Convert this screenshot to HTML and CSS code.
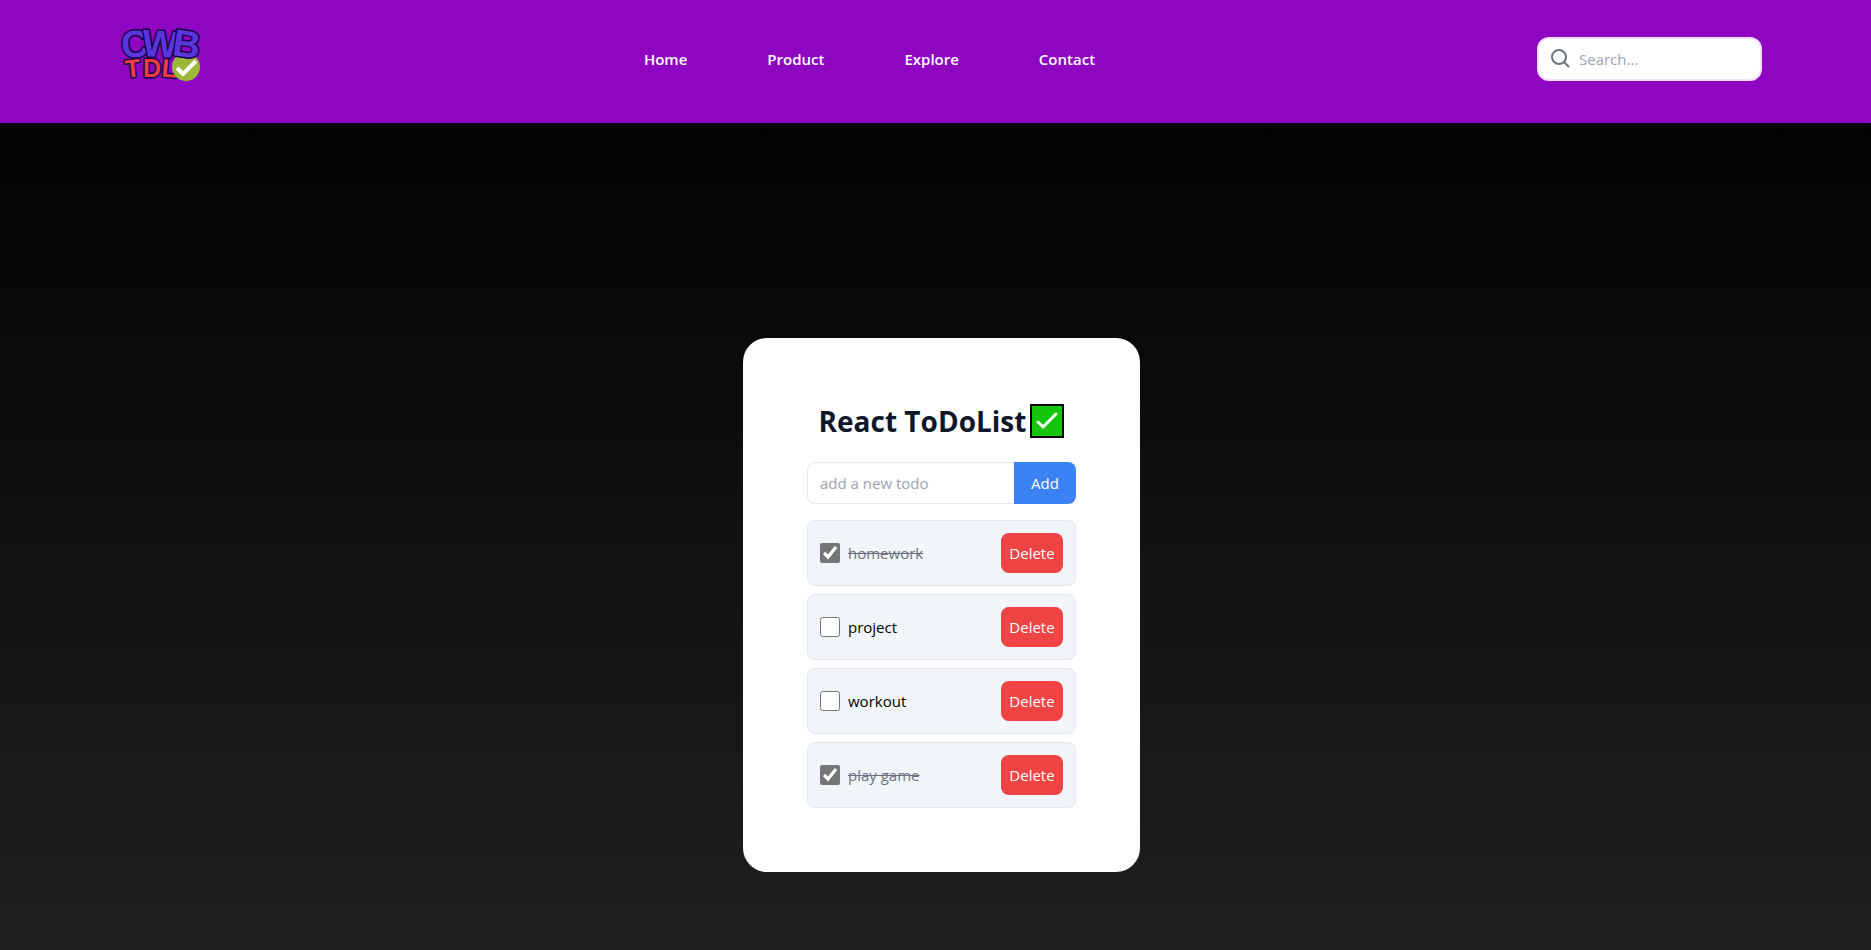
FILE: index.html
```html
<!DOCTYPE html>
<html lang="en">
<head>
<meta charset="utf-8">
<meta name="viewport" content="width=device-width, initial-scale=1">
<title>React ToDoList</title>
<link rel="stylesheet" href="styles.css">
</head>
<body class="page">
<header class="header">
  <a class="logo" href="#" aria-label="CWB TDL">
    <svg class="logo-art" viewBox="0 0 81 54" aria-hidden="true">
      <g class="logo-bottom">
        <text x="4" y="49" transform="rotate(-6 12 40)">T</text>
        <text x="22" y="49">D</text>
        <text x="41" y="49" transform="rotate(6 48 40)">L</text>
      </g>
      <circle cx="65" cy="39" r="14" fill="#9cb83a"/>
      <g class="logo-top">
        <text x="0" y="29" transform="rotate(-4 13 16)">C</text>
        <text x="21" y="29" transform="rotate(4 40 16)">W</text>
        <text x="52" y="29" transform="rotate(8 65 16)">B</text>
      </g>
      <path d="M56 40l6 6 13-13" fill="none" stroke="#fff" stroke-width="4"/>
    </svg>
  </a>
  <nav class="nav">
    <a class="nav-link" href="#">Home</a>
    <a class="nav-link" href="#">Product</a>
    <a class="nav-link" href="#">Explore</a>
    <a class="nav-link" href="#">Contact</a>
  </nav>
  <form class="search">
    <svg class="search-icon" viewBox="0 0 20 20" aria-hidden="true"><circle cx="8" cy="8" r="7"/><path d="M13 13l5 5"/></svg>
    <input class="search-input" type="search" aria-label="Search" placeholder="Search...">
  </form>
</header>
<main class="main">
  <section class="card">
    <h1 class="title">React ToDoList<svg class="title-check" viewBox="0 0 34 34" role="img" aria-label="done"><path d="M1 1h32v32H1z" fill="#16c60c" stroke="#000" stroke-width="2"/><path d="M8 18l5 5L26 10" fill="none" stroke="#fff" stroke-width="3" stroke-linecap="round" stroke-linejoin="round"/></svg></h1>
    <form class="add">
      <input class="add-input" type="text" aria-label="New todo" placeholder="add a new todo">
      <button class="add-button" type="button">Add</button>
    </form>
    <ul class="list">
      <li class="item"><label class="item-label"><input class="tick" type="checkbox" checked><span class="item-text">homework</span></label><button class="delete" type="button">Delete</button></li>
      <li class="item"><label class="item-label"><input class="tick" type="checkbox"><span class="item-text">project</span></label><button class="delete" type="button">Delete</button></li>
      <li class="item"><label class="item-label"><input class="tick" type="checkbox"><span class="item-text">workout</span></label><button class="delete" type="button">Delete</button></li>
      <li class="item"><label class="item-label"><input class="tick" type="checkbox" checked><span class="item-text">play game</span></label><button class="delete" type="button">Delete</button></li>
    </ul>
  </section>
</main>
</body>
</html>
```
FILE: styles.css
```css
* {
  box-sizing: border-box;
}

.page {
  margin: 0;
  min-height: 100vh;
  display: flex;
  flex-direction: column;
  font-family: "Segoe UI", "Open Sans", sans-serif;
  font-size: 15px;
  line-height: 24px;
  color: #000;
}

input,
button {
  margin: 0;
  font: inherit;
}

.header {
  display: flex;
  justify-content: space-between;
  align-items: flex-start;
  padding: 28px 109px 41px 121px;
  background: #8e05c2;
}

.logo-art {
  display: block;
  width: 81px;
  height: 54px;
  overflow: visible;
  font-family: "Liberation Sans", Arial, sans-serif;
  font-weight: 700;
}

.logo-top,
.logo-bottom {
  stroke: #150545;
  stroke-width: 3px;
  stroke-linejoin: round;
  paint-order: stroke;
}

.logo-top {
  font-size: 38px;
  fill: #5a35dc;
}

.logo-bottom {
  font-size: 25px;
  fill: #f83a46;
}

.nav {
  display: flex;
  gap: 80px;
  padding-top: 19px;
}

.nav-link {
  color: #fff;
  font-weight: 600;
  text-decoration: none;
}

.search {
  display: flex;
  align-items: center;
  gap: 8px;
  width: 225px;
  height: 44px;
  margin-top: 9px;
  padding: 0 12px;
  background: #fff;
  border: 2px solid #f3e0fb;
  border-radius: 12px;
}

.search-icon {
  flex: none;
  width: 20px;
  height: 20px;
  fill: none;
  stroke: #6b7280;
  stroke-width: 2;
}

.search-input {
  flex: 1;
  min-width: 0;
  padding: 0;
  border: 0;
  outline: 0;
  background: transparent;
}

.search-input::placeholder,
.add-input::placeholder {
  color: #9ca3af;
  opacity: 1;
}

.main {
  flex: 1;
  display: flex;
  justify-content: center;
  align-items: flex-start;
  padding: 215px 0 64px 12px;
  background: linear-gradient(#030303, #1f1f1f);
}

.card {
  width: 397px;
  padding: 64px;
  background: #fff;
  border-radius: 24px;
}

.title {
  display: flex;
  justify-content: center;
  align-items: center;
  gap: 4px;
  margin: 0 0 22px;
  font-size: 28px;
  line-height: 38px;
  font-weight: 700;
  color: #0f172a;
  white-space: nowrap;
}

.title-check {
  flex: none;
  width: 34px;
  height: 34px;
}

.add {
  display: flex;
  height: 42px;
  margin-bottom: 16px;
}

.add-input {
  flex: 1;
  min-width: 0;
  padding: 0 12px;
  border: 1px solid #e5e7eb;
  border-right: 0;
  border-radius: 8px 0 0 8px;
  background: #fff;
}

.add-button {
  width: 62px;
  padding: 0;
  border: 0;
  border-radius: 0 8px 8px 0;
  background: #3b82f6;
  color: #fff;
}

.list {
  display: grid;
  gap: 8px;
  margin: 0;
  padding: 0;
  list-style: none;
}

.item {
  display: flex;
  justify-content: space-between;
  align-items: center;
  padding: 12px;
  background: #f1f5f9;
  border: 1px solid #e5e7eb;
  border-radius: 8px;
}

.item-label {
  display: flex;
  align-items: center;
  gap: 8px;
}

.tick {
  width: 20px;
  height: 20px;
  accent-color: #757575;
}

.tick:checked + .item-text {
  color: #6b7280;
  text-decoration: line-through;
}

.delete {
  width: 62px;
  height: 40px;
  padding: 0;
  border: 0;
  border-radius: 8px;
  background: #ef4444;
  color: #fff;
}
```
